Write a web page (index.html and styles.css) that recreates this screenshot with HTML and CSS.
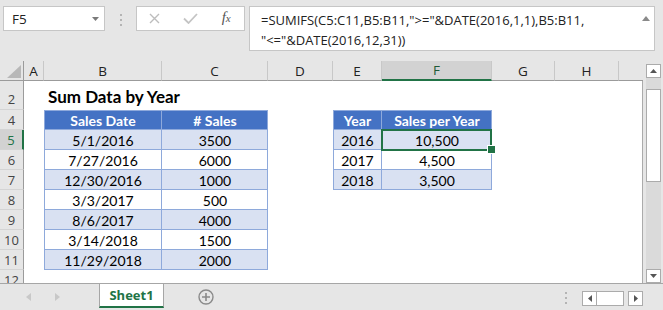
FILE: index.html
```html
<!DOCTYPE html>
<html>
<head>
    <title>Sum Data by Year</title>
<link rel="stylesheet" href="styles.css">
</head>
<body>

    <div id="fbar">
        <div class="namebox">
            <span>F5</span>
            <svg width="7" height="4" viewBox="0 0 7 4"><path d="M0 0h7L3.5 4z" fill="#7a7a7a"/></svg>
        </div>
        <div class="grip"><i></i><i></i><i></i></div>
        <div class="fbtns">
            <span class="slot">
                <svg width="11" height="11" viewBox="0 0 11 11"><path d="M1 1l9 9M10 1l-9 9" stroke="#bdbdbd" stroke-width="1.4"/></svg>
            </span>
            <span class="slot">
                <svg width="15" height="11" viewBox="0 0 15 11"><path d="M1 5.5l4.5 4.5L14 1" fill="none" stroke="#c4c4c4" stroke-width="1.8"/></svg>
            </span>
            <span class="slot fx">f<sub>x</sub></span>
        </div>
        <div class="formula">
            <div class="ftext">=SUMIFS(C5:C11,B5:B11,"&gt;="&amp;DATE(2016,1,1),B5:B11,<br>"&lt;="&amp;DATE(2016,12,31))</div>
            <svg width="8" height="5" viewBox="0 0 8 5"><path d="M0 5L4 0l4 5z" fill="#8a8a8a"/></svg>
        </div>
    </div>

    <div id="sheet">
        <div class="grid">
            <div class="row hd">
                <div class="corner"><svg width="15" height="13" viewBox="0 0 15 13"><path d="M14 0v13H0z" fill="#b8b8b8"/></svg></div>
                <div class="ch">A</div><div class="ch">B</div><div class="ch">C</div><div class="ch">D</div>
                <div class="ch">E</div><div class="ch on">F</div><div class="ch">G</div><div class="ch">H</div>
                <div class="ch end"></div>
            </div>
            <div class="row tall">
                <div class="rh">2</div><div></div>
                <div class="title">Sum Data by Year</div>
                <div></div><div></div><div></div><div></div><div></div><div></div><div class="e"></div>
            </div>
            <div class="row">
                <div class="rh">4</div><div></div>
                <div class="t h l">Sales Date</div><div class="t h">#&nbsp;Sales</div><div></div>
                <div class="t h l">Year</div><div class="t h">Sales per Year</div>
                <div></div><div></div><div class="e"></div>
            </div>
            <div class="row">
                <div class="rh on">5</div><div></div>
                <div class="t b l">5/1/2016</div><div class="t b">3500</div><div></div>
                <div class="t b l">2016</div><div class="t b cur">10,500</div>
                <div></div><div></div><div class="e"></div>
            </div>
            <div class="row">
                <div class="rh">6</div><div></div>
                <div class="t l">7/27/2016</div><div class="t">6000</div><div></div>
                <div class="t l">2017</div><div class="t">4,500</div>
                <div></div><div></div><div class="e"></div>
            </div>
            <div class="row">
                <div class="rh">7</div><div></div>
                <div class="t b l">12/30/2016</div><div class="t b">1000</div><div></div>
                <div class="t b l">2018</div><div class="t b">3,500</div>
                <div></div><div></div><div class="e"></div>
            </div>
            <div class="row">
                <div class="rh">8</div><div></div>
                <div class="t l">3/3/2017</div><div class="t">500</div>
                <div></div><div></div><div></div><div></div><div></div><div class="e"></div>
            </div>
            <div class="row">
                <div class="rh">9</div><div></div>
                <div class="t b l">8/6/2017</div><div class="t b">4000</div>
                <div></div><div></div><div></div><div></div><div></div><div class="e"></div>
            </div>
            <div class="row">
                <div class="rh">10</div><div></div>
                <div class="t l">3/14/2018</div><div class="t">1500</div>
                <div></div><div></div><div></div><div></div><div></div><div class="e"></div>
            </div>
            <div class="row">
                <div class="rh">11</div><div></div>
                <div class="t b l">11/29/2018</div><div class="t b">2000</div>
                <div></div><div></div><div></div><div></div><div></div><div class="e"></div>
            </div>
            <div class="row">
                <div class="rh">12</div><div></div>
                <div></div><div></div><div></div><div></div><div></div><div></div><div></div><div class="e"></div>
            </div>
        </div>

        <div class="vscroll">
            <div class="sbtn"><svg width="7" height="4" viewBox="0 0 7 4"><path d="M0 4L3.5 0 7 4z" fill="#555"/></svg></div>
            <div class="track"><div class="thumb"></div></div>
            <div class="sbtn"><svg width="7" height="4" viewBox="0 0 7 4"><path d="M0 0h7L3.5 4z" fill="#555"/></svg></div>
        </div>
    </div>

    <div id="tabs">
        <div class="nav">
            <svg width="5" height="8" viewBox="0 0 5 8"><path d="M5 0v8L0 4z" fill="#c8c8c8"/></svg>
            <svg width="5" height="8" viewBox="0 0 5 8"><path d="M0 0v8l5-4z" fill="#c8c8c8"/></svg>
        </div>
        <div class="tab">Sheet1</div>
        <svg class="add" width="16" height="16" viewBox="0 0 16 16"><circle cx="8" cy="8" r="7" fill="none" stroke="#8a8a8a" stroke-width="1.4"/><path d="M8 4v8M4 8h8" stroke="#8a8a8a" stroke-width="1.6"/></svg>
        <div class="hscroll">
            <div class="grip"><i></i><i></i><i></i></div>
            <div class="sbtn"><svg width="4" height="7" viewBox="0 0 4 7"><path d="M4 0v7L0 3.5z" fill="#555"/></svg></div>
            <div class="hthumb"></div>
            <div class="sbtn"><svg width="4" height="7" viewBox="0 0 4 7"><path d="M0 0v7l4-3.5z" fill="#555"/></svg></div>
        </div>
    </div>

</body>
</html>
```

FILE: styles.css
```css
* {
    box-sizing: border-box;
}
BODY {
    margin: 0;
    width: 663px;
    height: 310px;
    overflow: hidden;
    background: #e6e6e6;
    font-family: "Open Sans", "DejaVu Sans", sans-serif;
    color: #222;
}

/* formula bar */
#fbar {
    height: 61px;
    display: flex;
    align-items: flex-start;
    padding: 6px 0 0 3px;
}
.namebox {
    width: 102px;
    height: 25px;
    background: #fff;
    border: 1px solid #c6c6c6;
    display: flex;
    align-items: center;
    justify-content: space-between;
    padding: 0 5px 0 8px;
    font-size: 13.5px;
}
.grip {
    display: flex;
    flex-direction: column;
    gap: 3px;
}
.grip I {
    display: block;
    width: 2px;
    height: 2px;
    background: #b4b4b4;
}
#fbar .grip {
    margin: 8px 14px 0 15px;
}
.fbtns {
    width: 109px;
    height: 25px;
    background: #fff;
    border: 1px solid #c6c6c6;
    display: flex;
}
.slot {
    width: 36px;
    display: flex;
    align-items: center;
    justify-content: center;
}
.fx {
    font: italic 15px "Liberation Serif", serif;
    color: #555;
    padding-bottom: 2px;
}
.fx SUB {
    font-size: 11px;
    vertical-align: -1px;
}
.formula {
    margin-left: 4px;
    width: 406px;
    height: 45px;
    background: #fff;
    border: 1px solid #c6c6c6;
    display: flex;
    justify-content: space-between;
    padding: 3px 4px 0 11px;
}
.ftext {
    font-size: 13px;
    line-height: 20px;
    white-space: nowrap;
}
.formula SVG {
    margin-top: 6px;
}

/* worksheet */
#sheet {
    display: flex;
    height: 222px;
    overflow: hidden;
}
.grid {
    width: 643px;
    background: #fff;
}
.row {
    display: grid;
    grid-template-columns: 24px 20px 118px 106px 65px 49px 110px 63px 64px 24px;
    height: 20px;
}
.row.tall {
    height: 29px;
}
.row > DIV {
    display: flex;
    align-items: center;
    justify-content: center;
}
.row.hd {
    background: #e6e6e6;
}
.corner {
    border-right: 1px solid #9b9b9b;
    border-bottom: 1px solid #9b9b9b;
    padding: 2px 1px 0 6px;
}
.ch {
    border-right: 1px solid #c8c8c8;
    border-bottom: 1px solid #9b9b9b;
    font-size: 13.5px;
    color: #222;
}
.ch.on {
    background: #d2d2d2;
    border-bottom: 2px solid #217346;
    color: #1e5a38;
}
.ch.end {
    border-right: none;
}
.row > .rh {
    background: #e6e6e6;
    border-right: 1px solid #9b9b9b;
    border-bottom: 1px solid #d4d4d4;
    font-size: 13px;
    color: #444;
    align-items: flex-end;
    line-height: 18px;
}
.row.tall > .rh {
    padding-bottom: 1px;
}
.row > .rh.on {
    background: #d2d2d2;
    border-right: 2px solid #217346;
    color: #217346;
}
.row > .e {
    border-right: 1px solid #ababab;
}
.row > .title {
    justify-content: flex-start;
    align-items: flex-end;
    white-space: nowrap;
    padding: 0 0 3px 4px;
    font: bold 17px "Lato", sans-serif;
    color: #000;
}

/* tables */
.t {
    font: 14px "Lato", sans-serif;
    color: #000;
    padding-top: 1px;
    box-shadow: inset -1px -1px 0 #8ea9db;
}
.t.l {
    box-shadow: inset -1px -1px 0 #8ea9db, inset 1px 0 0 #8ea9db;
}
.t.b {
    background: #d9e1f2;
}
.t.h {
    background: #4472c4;
    color: #fff;
    font-weight: bold;
    box-shadow: inset -1px -1px 0 #8ea9db, inset 0 1px 0 #8ea9db;
}
.t.h.l {
    box-shadow: inset -1px -1px 0 #8ea9db, inset 1px 1px 0 #8ea9db;
}
.cur {
    position: relative;
}
.cur::before {
    content: "";
    position: absolute;
    top: -1px;
    left: -1px;
    right: 0;
    bottom: -1px;
    border: 2px solid #217346;
}
.cur::after {
    content: "";
    position: absolute;
    right: -4px;
    bottom: -4px;
    width: 7px;
    height: 7px;
    background: #217346;
    border: 1px solid #fff;
}

/* scroll bars */
.vscroll {
    width: 20px;
    padding: 3px 2px 0 3px;
    display: flex;
    flex-direction: column;
}
.sbtn {
    width: 15px;
    height: 14px;
    background: #fff;
    border: 1px solid #ababab;
    display: flex;
    align-items: center;
    justify-content: center;
}
.track {
    flex: 1;
    background: #dadada;
    padding-top: 11px;
}
.thumb {
    height: 93px;
    background: #fff;
    border: 1px solid #ababab;
}

/* sheet tabs */
#tabs {
    height: 27px;
    border-top: 1px solid #a6a6a6;
    display: flex;
    align-items: flex-start;
}
.nav {
    width: 99px;
    height: 25px;
    display: flex;
    align-items: center;
    gap: 24px;
    padding-left: 26px;
}
.tab {
    width: 65px;
    height: 24px;
    background: #fff;
    border-left: 1px solid #a6a6a6;
    border-right: 1px solid #a6a6a6;
    border-bottom: 2px solid #217346;
    display: flex;
    align-items: center;
    justify-content: center;
    font-size: 13px;
    font-weight: bold;
    color: #217346;
}
.add {
    margin: 5px 0 0 34px;
}
.hscroll {
    margin-left: auto;
    margin-right: 20px;
    display: flex;
    align-items: center;
    height: 22px;
    padding-top: 6px;
}
.hscroll .grip {
    margin-right: 15px;
}
.hscroll .sbtn {
    width: 15px;
    height: 15px;
}
.hthumb {
    width: 27px;
    height: 15px;
    background: #fff;
    border: 1px solid #ababab;
    border-left: none;
    margin-right: 4px;
}
```
